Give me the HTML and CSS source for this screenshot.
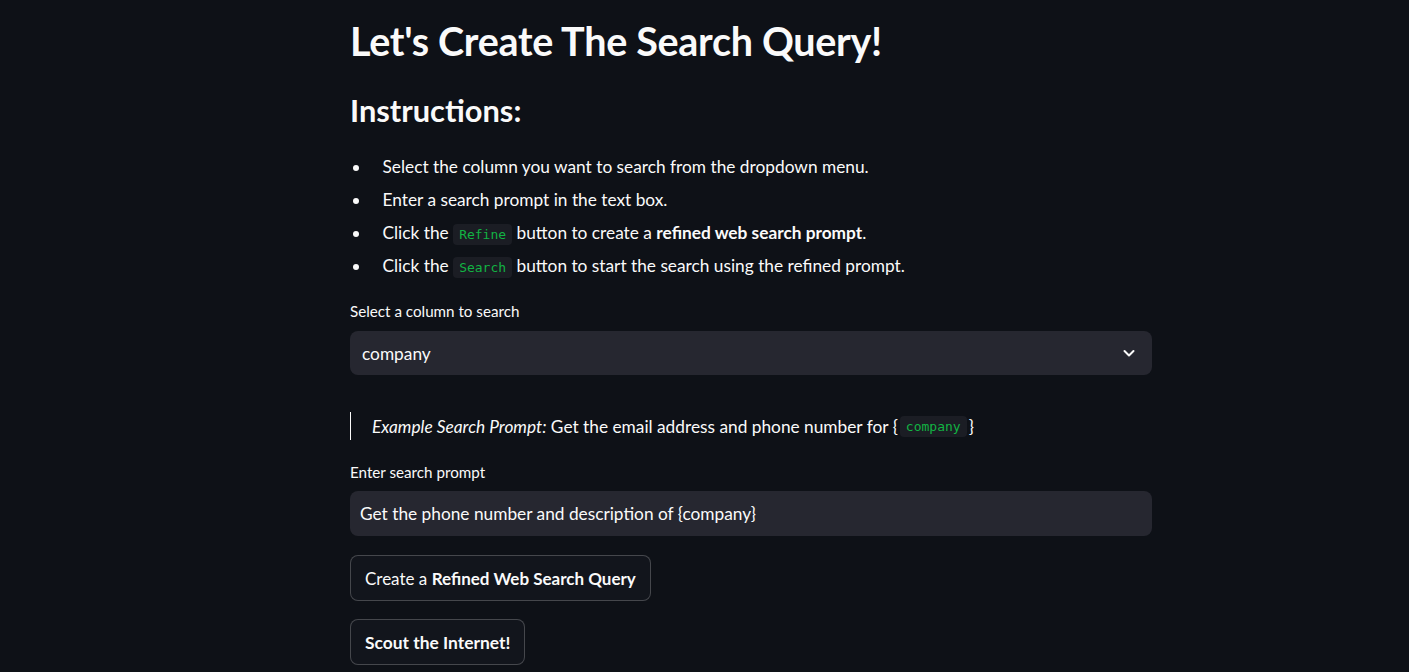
FILE: index.html
```html
<!DOCTYPE html>
<html lang="en">
<head>
<meta charset="utf-8">
<title>Search Query</title>
<link rel="stylesheet" href="styles.css">
</head>
<body>
<main class="page">
  <h1 class="title">Let's Create The Search Query!</h1>
  <h3 class="subtitle">Instructions:</h3>
  <ul class="steps">
    <li>Select the column you want to search from the dropdown menu.</li>
    <li>Enter a search prompt in the text box.</li>
    <li>Click the <code>Refine</code> button to create a <strong>refined web search prompt</strong>.</li>
    <li>Click the <code>Search</code> button to start the search using the refined prompt.</li>
  </ul>

  <label class="field-label">Select a column to search</label>
  <div class="select">
    <span class="select-value">company</span>
    <svg class="chevron" width="14" height="14" viewBox="0 0 14 14"><polyline points="2.5,5 7,9.5 11.5,5" fill="none" stroke="#fafafa" stroke-width="2" stroke-linecap="round" stroke-linejoin="round"/></svg>
  </div>

  <blockquote class="quote"><em>Example Search Prompt:</em> Get the email address and phone number for {<code>company</code>}</blockquote>

  <label class="field-label field-label-2">Enter search prompt</label>
  <div class="input">Get the phone number and description of {company}</div>

  <button class="btn btn-1">Create a <strong>Refined Web Search Query</strong></button>
  <button class="btn btn-2"><strong>Scout the Internet!</strong></button>
</main>
</body>
</html>
```

FILE: styles.css
```css
html, body {
  margin: 0;
  padding: 0;
  background: #0e1117;
  color: #fafafa;
  font-family: Lato, "Source Sans Pro", sans-serif;
}

.page {
  width: 802px;
  margin-left: 350px;
  padding-top: 15px;
  display: flex;
  flex-direction: column;
  align-items: flex-start;
}

.title {
  margin: 0;
  font-size: 39.5px;
  line-height: 52px;
  font-weight: 700;
  letter-spacing: -0.3px;
}

.subtitle {
  margin: 27px 0 0;
  font-size: 30.8px;
  line-height: 34px;
  font-weight: 700;
}

.steps {
  margin: 22px 0 0;
  padding: 0;
  list-style: none;
  font-size: 17.3px;
}

.steps li {
  line-height: 33px;
  height: 33px;
}

.steps li::before {
  content: "";
  display: inline-block;
  width: 6px;
  height: 6px;
  border-radius: 50%;
  background: #fafafa;
  margin: 0 24px 0 2.5px;
  vertical-align: middle;
  position: relative;
  top: -1px;
}

code {
  font-family: "DejaVu Sans Mono", "Liberation Mono", monospace;
  font-size: 13px;
  color: #12b343;
  background: #1b1d24;
  padding: 3px 6px;
  border-radius: 4px;
}

strong {
  font-weight: 700;
}

.field-label {
  margin-top: 19px;
  font-size: 15.2px;
  line-height: 20px;
}

.select {
  margin-top: 10px;
  width: 100%;
  box-sizing: border-box;
  height: 44px;
  background: #262730;
  border-radius: 8px;
  padding: 0 16px 0 12px;
  display: flex;
  align-items: center;
  justify-content: space-between;
  font-size: 17.3px;
}

.chevron {
  display: block;
}

.quote {
  margin: 37px 0 0;
  border-left: 1px solid #fafafa;
  padding-left: 21px;
  height: 28px;
  display: flex;
  align-items: center;
  font-size: 17.3px;
  white-space: pre;
}

.quote code {
  margin: 0 2px;
}

.field-label-2 {
  margin-top: 22px;
}

.input {
  margin-top: 9px;
  width: 100%;
  box-sizing: border-box;
  height: 45px;
  background: #262730;
  border-radius: 8px;
  padding: 0 10px;
  display: flex;
  align-items: center;
  font-size: 17.3px;
}

.btn {
  margin-top: 19px;
  height: 46px;
  padding: 0 14px;
  background: #12151c;
  color: #fafafa;
  border: 1px solid rgba(250, 250, 250, 0.22);
  border-radius: 8px;
  font-family: inherit;
  font-size: 17px;
  cursor: pointer;
}

.btn-2 {
  margin-top: 18px;
  font-size: 17.4px;
}
```
